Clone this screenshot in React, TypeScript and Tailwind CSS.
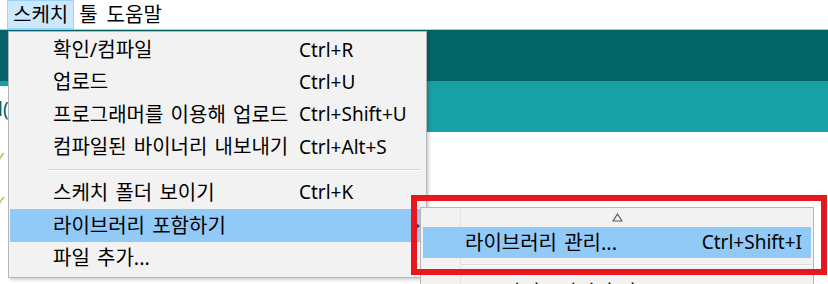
import React from "react";

const mainItems: ({ label: string; key?: string; h: string; active?: boolean; sub?: boolean } | null)[] = [
  { label: "확인/컴파일", key: "Ctrl+R", h: "h-[32px]" },
  { label: "업로드", key: "Ctrl+U", h: "h-[32px]" },
  { label: "프로그래머를 이용해 업로드", key: "Ctrl+Shift+U", h: "h-[33px]" },
  { label: "컴파일된 바이너리 내보내기", key: "Ctrl+Alt+S", h: "h-[32px]" },
  null,
  { label: "스케치 폴더 보이기", key: "Ctrl+K", h: "h-[33px]" },
  { label: "라이브러리 포함하기", h: "h-[33px]", active: true, sub: true },
  { label: "파일 추가...", h: "h-[32px]" },
];

function MenuBar() {
  return (
    <div className="flex h-[30px] items-stretch pl-[7px] border-b border-[#c3c3c3] text-[20px] text-black">
      <div className="flex items-center px-[5px] bg-[#cce8ff] border border-[#99d1ff]">스케치</div>
      <div className="flex items-center px-[5px]">툴</div>
      <div className="flex items-center px-[4px]">도움말</div>
    </div>
  );
}

function MainMenu() {
  return (
    <div className="absolute left-[8px] top-[31px] w-[419px] h-[247px] bg-[#f2f2f2] border border-[#b7b7b7] shadow-[2px_2px_3px_rgba(0,0,0,0.18)] pt-[2px] text-[19px] text-black">
      {mainItems.map((it, i) =>
        it === null ? (
          <div key={i} className="h-[13px] flex items-center pl-[39px] pr-[6px]">
            <div className="w-full h-[2px] border-t border-[#d9d9d9] border-b border-b-white" />
          </div>
        ) : (
          <div
            key={i}
            className={`${it.h} ml-[1px] mr-[1px] flex items-center pl-[43px] ${it.active ? "bg-[#91c9f7]" : ""}`}
          >
            <span className="w-[246px] whitespace-nowrap text-[20px] [word-spacing:2px]">{it.label}</span>
            {it.key && <span className="whitespace-nowrap">{it.key}</span>}
            {it.sub && (
              <svg className="ml-auto mr-[5px]" width="5" height="8" viewBox="0 0 5 8">
                <path d="M0 0 L5 4 L0 8 Z" fill="#404040" />
              </svg>
            )}
          </div>
        )
      )}
    </div>
  );
}

function SubMenu() {
  return (
    <div className="absolute left-[420px] top-[207px] w-[394px] h-[90px] bg-[#f2f2f2] border border-[#b7b7b7] text-[19px] text-black">
      <div className="absolute left-[39px] top-0 bottom-0 w-px bg-[#e2e2e2]" />
      <div className="relative h-[19px] flex items-center justify-center">
        <svg width="11" height="9" viewBox="0 0 11 9">
          <path d="M5.5 1 L10 8 L1 8 Z" fill="none" stroke="#5a5a5a" strokeWidth="1.2" />
        </svg>
      </div>
      <div className="relative h-[31px] mx-[2px] flex items-center justify-between pl-[42px] pr-[9px] bg-[#91c9f7]">
        <span className="whitespace-nowrap text-[20px] [word-spacing:2px]">라이브러리 관리...</span>
        <span className="whitespace-nowrap">Ctrl+Shift+I</span>
      </div>
      <div className="relative h-[14px] flex items-center pl-[41px] pr-[2px]">
        <div className="w-full h-[2px] border-t border-[#d9d9d9] border-b border-b-white" />
      </div>
      <div className="relative h-[31px] flex items-center pl-[82px] pt-[10px]">
        <span className="whitespace-nowrap text-[20px]">라이브러리 추가...</span>
      </div>
    </div>
  );
}

export default function App() {
  return (
    <div className="relative w-[828px] h-[284px] overflow-hidden bg-white font-['Noto_Sans','Noto_Sans_CJK_KR',sans-serif]">
      <MenuBar />
      <div className="h-[51px] bg-[#036468]" />
      <div className="h-[51px] bg-[#17a1a5] flex items-end">
        <div className="w-[300px] h-[46px] bg-white flex items-center pl-0 text-[19px] text-[#006468] whitespace-nowrap">
          <span className="-ml-[2px]">l(</span>
        </div>
      </div>
      <div className="flex flex-col pt-[20px] gap-[32px] text-[12px] text-[#b49a00] leading-none">
        <span className="-ml-[4px]">✓</span>
        <span className="-ml-[4px]">✓</span>
      </div>
      <MainMenu />
      <SubMenu />
      <div className="absolute left-[411px] top-[195px] w-[416px] h-[80px] border-[6px] border-[#e8161e]" />
    </div>
  );
}
